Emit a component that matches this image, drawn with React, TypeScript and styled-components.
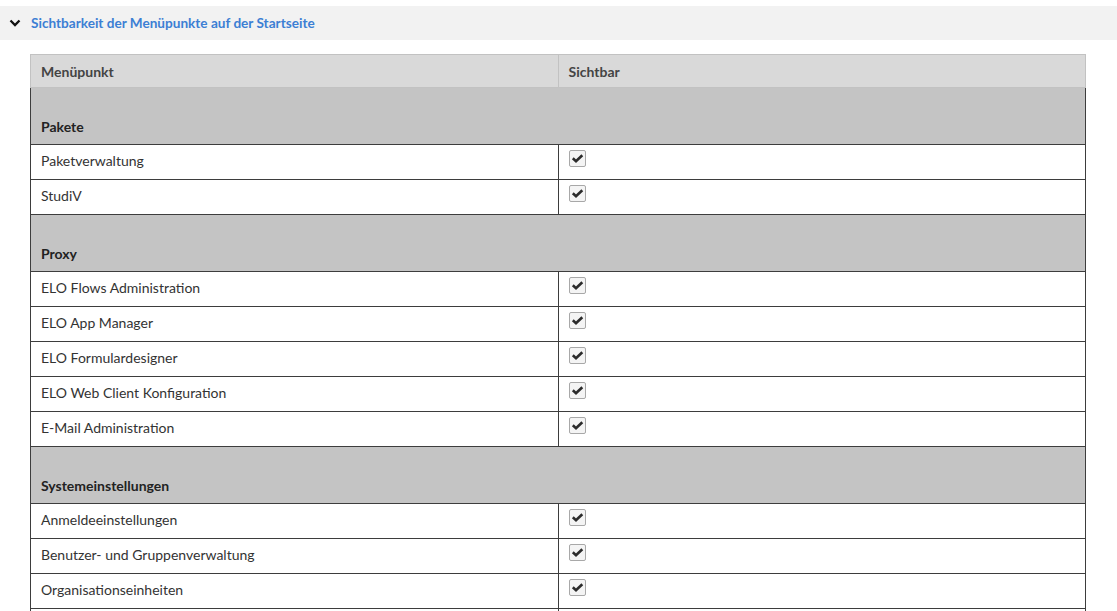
import React from "react";
import styled, { createGlobalStyle } from "styled-components";

const Global = createGlobalStyle`
  html, body { margin: 0; padding: 0; background: #fff; }
  body { font-family: Lato, "Noto Sans", sans-serif; color: #333; }
`;

const Page = styled.div`
  padding-top: 6px;
`;

const SectionHeader = styled.div`
  display: flex;
  align-items: center;
  height: 34px;
  background: #f2f2f2;
  padding-left: 9px;
  gap: 10px;
`;

const Title = styled.span`
  color: #3c7fd4;
  font-size: 13.6px;
  font-weight: 700;
`;

const Content = styled.div`
  padding: 14px 31px 0 30px;
`;

const Table = styled.table`
  width: 100%;
  border-collapse: collapse;
  font-size: 14px;
`;

const HeadCell = styled.th`
  background: #d9d9d9;
  border: 1px solid #c2c2c2;
  text-align: left;
  font-weight: 700;
  color: #444;
  height: 32px;
  padding: 0 10px;
  width: 50%;
`;

const GroupCell = styled.td`
  background: #c4c4c4;
  border: 1px solid #3d3d3d;
  border-top: none;
  height: 57px;
  box-sizing: border-box;
  padding: 0 10px 7px;
  line-height: 20px;
  vertical-align: bottom;
  font-weight: 700;
  color: #222;
`;

const Cell = styled.td`
  border: 1px solid #3d3d3d;
  height: 35px;
  padding: 6px 10px 8px;
  box-sizing: border-box;
  vertical-align: top;
  line-height: 20px;
  color: #333;
`;

const CheckCell = styled(Cell)`
  padding-top: 5px;
`;

const CheckBox = styled.span`
  display: flex;
  align-items: center;
  justify-content: center;
  width: 15px;
  height: 15px;
  border: 1px solid #a8a8a8;
  border-radius: 2px;
  background: #f4f4f4;
`;

const Check = () => (
  <CheckBox>
    <svg width="13" height="13" viewBox="0 0 13 13">
      <path d="M1.8 6.3 L5 9.3 L11.3 3.2" fill="none" stroke="#2b2b2b" strokeWidth="2.6" />
    </svg>
  </CheckBox>
);

const Chevron = () => (
  <svg width="12" height="12" viewBox="0 0 12 12">
    <path d="M1.5 3.5 L6 8 L10.5 3.5" fill="none" stroke="#111" strokeWidth="2.3" />
  </svg>
);

const groups: { name: string; items: string[] }[] = [
  { name: "Pakete", items: ["Paketverwaltung", "StudiV"] },
  {
    name: "Proxy",
    items: [
      "ELO Flows Administration",
      "ELO App Manager",
      "ELO Formulardesigner",
      "ELO Web Client Konfiguration",
      "E-Mail Administration",
    ],
  },
  {
    name: "Systemeinstellungen",
    items: [
      "Anmeldeeinstellungen",
      "Benutzer- und Gruppenverwaltung",
      "Organisationseinheiten",
    ],
  },
];

export default function App() {
  return (
    <Page>
      <Global />
      <SectionHeader>
        <Chevron />
        <Title>Sichtbarkeit der Menüpunkte auf der Startseite</Title>
      </SectionHeader>
      <Content>
        <Table>
          <thead>
            <tr>
              <HeadCell>Menüpunkt</HeadCell>
              <HeadCell>Sichtbar</HeadCell>
            </tr>
          </thead>
          <tbody>
            {groups.map((g) => (
              <React.Fragment key={g.name}>
                <tr>
                  <GroupCell colSpan={2}>{g.name}</GroupCell>
                </tr>
                {g.items.map((it) => (
                  <tr key={it}>
                    <Cell>{it}</Cell>
                    <CheckCell>
                      <Check />
                    </CheckCell>
                  </tr>
                ))}
              </React.Fragment>
            ))}
            <tr>
              <Cell>&nbsp;</Cell>
              <Cell>&nbsp;</Cell>
            </tr>
          </tbody>
        </Table>
      </Content>
    </Page>
  );
}
